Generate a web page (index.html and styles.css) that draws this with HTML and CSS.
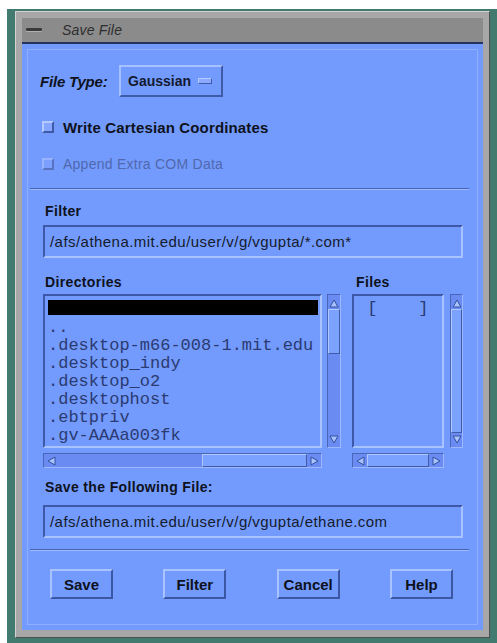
FILE: index.html
```html
<!DOCTYPE html>
<html>
<head>
<meta charset="utf-8">
<link rel="stylesheet" href="styles.css">
</head>
<body>
<div class="desktop">
  <div class="window">
    <div class="titlebar">
      <span class="menu-btn"><span class="menu-dash"></span></span>
      <span class="title">Save File</span>
    </div>
    <div class="panel">
      <div class="type-row">
        <span class="type-label">File Type:</span>
        <div class="option-btn"><span>Gaussian</span><span class="option-ind"></span></div>
      </div>
      <div class="check-row"><span class="check"></span><span class="check-text bold">Write Cartesian Coordinates</span></div>
      <div class="check-row disabled"><span class="check"></span><span class="check-text">Append Extra COM Data</span></div>
      <div class="sep"></div>
      <div class="label filter-label">Filter</div>
      <div class="field">/afs/athena.mit.edu/user/v/g/vgupta/*.com*</div>
      <div class="lists">
        <div class="list-group dirs">
          <div class="label group-label">Directories</div>
          <div class="group-body">
            <div class="list">
              <div class="item selected">.</div>
              <div class="item">..</div>
              <div class="item">.desktop-m66-008-1.mit.edu</div>
              <div class="item">.desktop_indy</div>
              <div class="item">.desktop_o2</div>
              <div class="item">.desktophost</div>
              <div class="item">.ebtpriv</div>
              <div class="item">.gv-AAAa003fk</div>
            </div>
            <div class="vscroll">
              <span class="arrow"><svg width="10" height="9" viewBox="0 0 10 9"><polygon points="5,1 9,8 1,8" fill="#a9c3ff" stroke="#34509c" stroke-width="1"/></svg></span>
              <span class="slider v-slider"></span>
              <span class="trough"></span>
              <span class="arrow"><svg width="10" height="9" viewBox="0 0 10 9"><polygon points="1,1 9,1 5,8" fill="#a9c3ff" stroke="#34509c" stroke-width="1"/></svg></span>
            </div>
            <div class="hscroll">
              <span class="arrow"><svg width="9" height="10" viewBox="0 0 9 10"><polygon points="1,5 8,1 8,9" fill="#a9c3ff" stroke="#34509c" stroke-width="1"/></svg></span>
              <span class="trough"></span>
              <span class="slider h-slider"></span>
              <span class="arrow"><svg width="9" height="10" viewBox="0 0 9 10"><polygon points="1,1 8,5 1,9" fill="#a9c3ff" stroke="#34509c" stroke-width="1"/></svg></span>
            </div>
          </div>
        </div>
        <div class="list-group files">
          <div class="label group-label">Files</div>
          <div class="group-body">
            <div class="list">
              <div class="item"> [    ]</div>
            </div>
            <div class="vscroll">
              <span class="arrow"><svg width="10" height="9" viewBox="0 0 10 9"><polygon points="5,1 9,8 1,8" fill="#a9c3ff" stroke="#34509c" stroke-width="1"/></svg></span>
              <span class="slider full"></span>
              <span class="arrow"><svg width="10" height="9" viewBox="0 0 10 9"><polygon points="1,1 9,1 5,8" fill="#a9c3ff" stroke="#34509c" stroke-width="1"/></svg></span>
            </div>
            <div class="hscroll">
              <span class="arrow"><svg width="9" height="10" viewBox="0 0 9 10"><polygon points="1,5 8,1 8,9" fill="#a9c3ff" stroke="#34509c" stroke-width="1"/></svg></span>
              <span class="slider full"></span>
              <span class="arrow"><svg width="9" height="10" viewBox="0 0 9 10"><polygon points="1,1 8,5 1,9" fill="#a9c3ff" stroke="#34509c" stroke-width="1"/></svg></span>
            </div>
          </div>
        </div>
      </div>
      <div class="label save-label">Save the Following File:</div>
      <div class="field">/afs/athena.mit.edu/user/v/g/vgupta/ethane.com</div>
      <div class="sep sep-bottom"></div>
      <div class="buttons">
        <div class="btn">Save</div>
        <div class="btn">Filter</div>
        <div class="btn">Cancel</div>
        <div class="btn">Help</div>
      </div>
    </div>
  </div>
</div>
</body>
</html>
```
FILE: styles.css
```css
html, body {
  margin: 0;
  padding: 0;
  background: #ffffff;
}

body {
  width: 497px;
  height: 643px;
  overflow: hidden;
  font-family: "Liberation Sans", Arial, sans-serif;
}

/* desktop backdrop behind the dialog */
.desktop {
  margin: 9px 0 0 7px;
  height: 634px;
  box-sizing: border-box;
  padding: 2px 0 0 8px;
  background: #437a6f;
}

/* window manager frame */
.window {
  width: 475px;
  height: 627px;
  box-sizing: border-box;
  padding: 5px 6px 7px 6px;
  background: #a7a7a7;
  border: 1px solid;
  border-color: #d2d2d2 #4e4e4e #4e4e4e #d2d2d2;
  display: flex;
  flex-direction: column;
}

.titlebar {
  height: 25px;
  flex: none;
  display: flex;
  align-items: center;
  background: #8b8b8b;
  border-bottom: 2px solid #27335f;
  box-shadow: inset 0 1px 0 #a9a9a9;
}

.menu-btn {
  width: 24px;
  height: 25px;
  display: flex;
  align-items: center;
  justify-content: center;
  margin-left: 0;
}

.menu-dash {
  width: 16px;
  height: 3px;
  background: #3a3a3a;
  border-radius: 1px;
  box-shadow: 0 1px 0 #b0b0b0;
}

.title {
  margin-left: 16px;
  font-style: italic;
  font-size: 14px;
  color: #2e2e2e;
  letter-spacing: 0.2px;
}

/* dialog body */
.panel {
  flex: 1;
  background: #739bfd;
  box-shadow: inset 0 0 0 5px #739bfd, inset 0 0 0 6px #8eaeff;
  padding: 21px 20px 0 21px;
  display: flex;
  flex-direction: column;
}

.type-row {
  height: 32px;
  display: flex;
  align-items: center;
}

.type-label {
  width: 79px;
  margin-left: -3px;
  font-weight: bold;
  font-style: italic;
  font-size: 15px;
  color: #0e1220;
  letter-spacing: -0.2px;
}

.option-btn {
  width: 104px;
  height: 32px;
  box-sizing: border-box;
  border: 2px solid;
  border-color: #a6c1ff #3f5ba8 #3f5ba8 #a6c1ff;
  display: flex;
  align-items: center;
  padding-left: 7px;
  font-size: 14px;
  font-weight: bold;
  color: #141a30;
}

.option-ind {
  width: 14px;
  height: 6px;
  margin-left: 7px;
  box-sizing: border-box;
  border: 1px solid;
  border-color: #b4caff #3f5ba8 #3f5ba8 #b4caff;
  background: #8aa9ff;
}

.check-row {
  height: 20px;
  display: flex;
  align-items: center;
  margin-top: 20px;
  font-size: 14px;
  color: #0e1220;
}

.check-row.disabled {
  margin-top: 17px;
  color: #5068ae;
}

.check {
  width: 12px;
  height: 12px;
  box-sizing: border-box;
  margin-left: -1px;
  margin-right: 9px;
  border: 2px solid;
  border-color: #b3c9ff #3f5ba8 #3f5ba8 #b3c9ff;
  background: #86a6ff;
}

.disabled .check {
  border-color: #98b4ff #5873c0 #5873c0 #98b4ff;
  background: #7c9ffd;
}

.check-text {
  letter-spacing: 0.25px;
}

.check-text.bold {
  font-weight: bold;
  font-size: 15px;
  letter-spacing: 0.15px;
}

/* etched separators spanning the dialog */
.sep {
  height: 0;
  margin: 14px -6px 0 -13px;
  border-top: 1px solid #4763b3;
  border-bottom: 1px solid #9fbbff;
}

.sep-bottom {
  margin-top: 11px;
}

.label {
  font-weight: bold;
  font-size: 14px;
  line-height: 16px;
  color: #0e1220;
  letter-spacing: 0.35px;
  margin-left: 2px;
}

.filter-label {
  margin-top: 13px;
}

.field {
  height: 33px;
  box-sizing: border-box;
  margin-top: 6px;
  border: 2px solid;
  border-color: #3c58a6 #a9c3ff #a9c3ff #3c58a6;
  display: flex;
  align-items: center;
  padding-left: 5px;
  font-size: 15px;
  color: #151a2c;
  letter-spacing: 0.45px;
  white-space: pre;
}

/* directory and file lists */
.lists {
  margin-top: 16px;
  display: flex;
  gap: 11px;
}

.group-body {
  margin-top: 4px;
  display: grid;
  row-gap: 5px;
}

.dirs .group-body {
  grid-template-columns: 279px 14px;
  column-gap: 5px;
}

.files .group-body {
  grid-template-columns: 92px 13px;
  column-gap: 6px;
}

.files .group-label {
  margin-left: 4px;
}

.list {
  height: 154px;
  box-sizing: border-box;
  border: 2px solid;
  border-color: #3c58a6 #a9c3ff #a9c3ff #3c58a6;
  padding: 4px 2px 0 3px;
  font-family: "Liberation Mono", "Courier New", monospace;
  font-size: 17px;
  color: #2b3a70;
  overflow: hidden;
}

.item {
  height: 18px;
  line-height: 18px;
  white-space: pre;
}

.item.selected {
  height: 15px;
  margin-bottom: 4px;
  background: #000000;
  color: #000000;
}

.vscroll {
  height: 154px;
  box-sizing: border-box;
  padding: 2px 0;
  display: flex;
  flex-direction: column;
  background: #6a8cf2;
  border: 1px solid;
  border-color: #4a66b8 #9db8ff #9db8ff #4a66b8;
}

.hscroll {
  height: 15px;
  box-sizing: border-box;
  display: flex;
  background: #6a8cf2;
  border: 1px solid;
  border-color: #4a66b8 #9db8ff #9db8ff #4a66b8;
}

.arrow {
  flex: none;
  display: flex;
  align-items: center;
  justify-content: center;
}

.vscroll .arrow {
  height: 12px;
}

.hscroll .arrow {
  width: 14px;
}

.slider {
  box-sizing: border-box;
  background: #7ca2ff;
  border: 1px solid;
  border-color: #b1c8ff #3f5ba8 #3f5ba8 #b1c8ff;
}

.v-slider {
  height: 45px;
  flex: none;
}

.h-slider {
  width: 105px;
  flex: none;
}

.trough {
  flex: 1;
}

.slider.full {
  flex: 1;
}

.save-label {
  margin-top: 11px;
}

.save-label + .field {
  margin-top: 10px;
}

.buttons {
  margin-top: 18px;
  padding: 0 10px 0 7px;
  display: flex;
  justify-content: space-between;
}

.btn {
  width: 63px;
  height: 30px;
  box-sizing: border-box;
  border: 2px solid;
  border-color: #a9c3ff #3b57a4 #3b57a4 #a9c3ff;
  display: flex;
  align-items: center;
  justify-content: center;
  font-weight: bold;
  font-size: 15px;
  color: #0e1220;
}
```
